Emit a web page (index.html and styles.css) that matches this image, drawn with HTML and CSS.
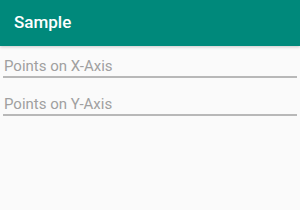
FILE: index.html
```html
<!DOCTYPE html>
<html lang="en">
<head>
	<meta charset="UTF-8">
	<title>Sample</title>
	<link rel="stylesheet" href="styles.css">
</head>
<body>
	<div class="toolbar">Sample</div>
	<div class="form">
		<input type="text" class="field" placeholder="Points on X-Axis">
		<input type="text" class="field" placeholder="Points on Y-Axis">
	</div>
</body>
</html>
```

FILE: styles.css
```css
body{
	margin: 0;
	background: #fafafa;
	font-family: Roboto, "Noto Sans", sans-serif;
}
.toolbar{
	height: 46px;
	background: #00897b;
	color: #fff;
	font-size: 17px;
	font-weight: 500;
	line-height: 44px;
	padding-left: 14px;
	box-shadow: 0 1px 3px rgba(0,0,0,0.2);
}
.form{
	padding: 2px 3px 0;
}
.field{
	display: block;
	width: 100%;
	box-sizing: border-box;
	height: 30px;
	margin-top: 8px;
	padding: 8px 1px 0;
	border: none;
	border-bottom: 2px solid #b8b8b8;
	background: transparent;
	font-family: Roboto, "Noto Sans", sans-serif;
	font-size: 15px;
	color: #333;
	outline: none;
}
.field:first-child{
	margin-top: 0;
}
.field::placeholder{
	color: #a0a0a0;
}
```
